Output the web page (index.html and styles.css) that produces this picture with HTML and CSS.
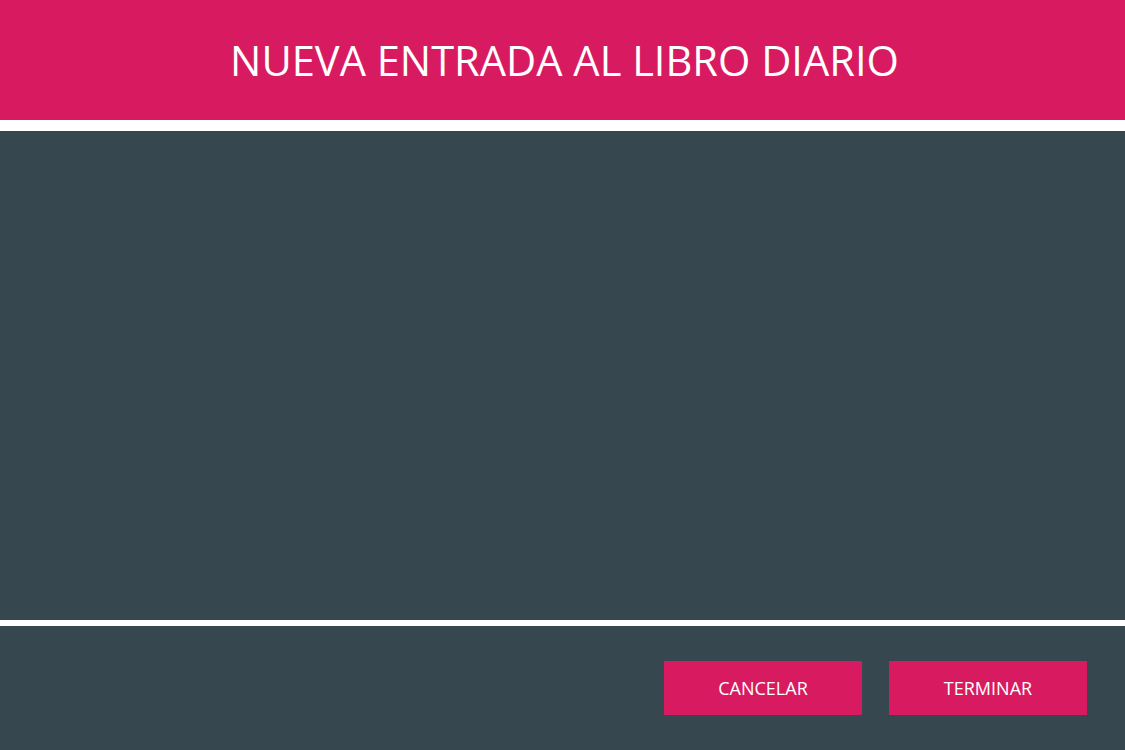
FILE: index.html
```html
<!DOCTYPE html>
<html lang="es">
<head>
<meta charset="utf-8">
<title>Nueva entrada al libro diario</title>
<link rel="stylesheet" href="styles.css">
</head>
<body>
<div class="app">
  <header class="header">
    <h1 class="title">NUEVA ENTRADA AL LIBRO DIARIO</h1>
  </header>
  <main class="content"></main>
  <footer class="footer">
    <button class="btn" type="button">CANCELAR</button>
    <button class="btn" type="button">TERMINAR</button>
  </footer>
</div>
</body>
</html>
```

FILE: styles.css
```css
html, body {
  margin: 0;
  padding: 0;
  background: #ffffff;
}
body {
  font-family: "Open Sans", "Noto Sans", "DejaVu Sans", sans-serif;
}
.app {
  width: 1125px;
  height: 750px;
  display: flex;
  flex-direction: column;
  overflow: hidden;
}
.header {
  height: 120px;
  background: #d81b60;
  display: flex;
  align-items: center;
  justify-content: center;
  flex: none;
}
.title {
  margin: 0;
  color: #ffffff;
  font-weight: 400;
  font-size: 41.6px;
  padding-left: 4px;
}
.content {
  margin-top: 11px;
  height: 489px;
  background: #37474f;
  flex: none;
}
.footer {
  margin-top: 6px;
  flex: 1;
  background: #37474f;
  display: flex;
  justify-content: flex-end;
  align-items: flex-start;
  gap: 27px;
  padding: 35px 38px 0 0;
}
.btn {
  width: 198px;
  height: 54px;
  border: 0;
  background: #d81b60;
  color: #ffffff;
  font-family: "Open Sans", "Noto Sans", sans-serif;
  font-size: 18px;
  padding: 0;
}
```
